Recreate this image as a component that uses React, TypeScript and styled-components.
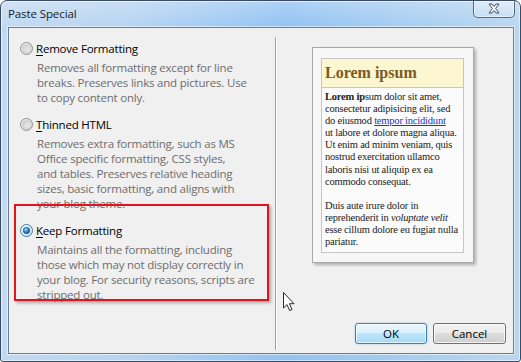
import React from "react";
import styled, { createGlobalStyle } from "styled-components";

const Global = createGlobalStyle`
  html, body { margin: 0; padding: 0; background: #ffffff; }
  body { width: 521px; height: 362px; overflow: hidden; }
  #root { width: 521px; height: 362px; }
`;

const Window = styled.div`
  position: relative;
  width: 521px;
  height: 362px;
  box-sizing: border-box;
  border: 1px solid #3a4c63;
  border-radius: 7px 7px 3px 3px;
  background:
    linear-gradient(180deg, rgba(255,255,255,0.25) 0px, rgba(255,255,255,0) 26px),
    linear-gradient(90deg, #c2daf1 0%, #b6d4f2 25%, #93c3f3 55%, #a4ccf2 75%, #bad7f0 100%);
  box-shadow: inset 0 0 0 1px rgba(255, 255, 255, 0.55);
  display: flex;
  flex-direction: column;
  font-family: "Segoe UI", "Open Sans", "Noto Sans", sans-serif;
  overflow: hidden;
`;

const TitleBar = styled.div`
  height: 26px;
  flex: none;
  display: flex;
  align-items: flex-start;
  justify-content: space-between;
  padding-left: 7px;
  padding-right: 5px;
`;

const TitleText = styled.span`
  font-size: 11.5px;
  line-height: 26px;
  color: #1b1b1b;
  letter-spacing: -0.1px;
`;

const CloseButton = styled.div`
  width: 42px;
  height: 18px;
  margin-top: -1px;
  box-sizing: border-box;
  border: 1px solid rgba(40, 62, 92, 0.75);
  border-top: none;
  border-radius: 0 0 5px 5px;
  background: linear-gradient(180deg, rgba(255,255,255,0.45), rgba(255,255,255,0.15));
  box-shadow: inset 0 0 0 1px rgba(255,255,255,0.5);
  display: flex;
  align-items: center;
  justify-content: center;
`;

const Client = styled.div`
  flex: 1;
  margin: 0 6px 7px 7px;
  border: 1px solid #6a7d94;
  background: #f0f0f0;
  box-shadow: 0 0 0 1px rgba(255, 255, 255, 0.55);
  display: grid;
  grid-template-columns: 266px 2px 1fr;
  min-height: 0;
`;

const Options = styled.div`
  padding: 13px 0 0 11px;
  display: flex;
  flex-direction: column;
`;

const Option = styled.div`
  display: flex;
  flex-direction: column;
  margin-bottom: 12px;
`;

const OptionLabel = styled.div`
  display: flex;
  align-items: center;
  gap: 3px;
  font-size: 11.5px;
  letter-spacing: -0.2px;
  line-height: 15px;
  height: 15px;
  color: #000000;
  margin-bottom: 4px;
  white-space: nowrap;
  u { text-decoration: underline; text-underline-offset: 2px; }
`;

const Description = styled.div`
  margin-left: 17px;
  font-size: 11.5px;
  letter-spacing: -0.2px;
  line-height: 15px;
  color: #6d6d6d;
  white-space: nowrap;
`;

const Separator = styled.div`
  margin: 9px 0 3px 0;
  border-left: 1px solid #a0a0a0;
  border-right: 1px solid #ffffff;
`;

const RightPane = styled.div`
  display: flex;
  flex-direction: column;
  padding: 19px 7px 9px 35px;
`;

const PreviewCard = styled.div`
  width: 162px;
  height: 216px;
  box-sizing: border-box;
  border: 1px solid #a9a9a9;
  background: #f7f7f7;
  box-shadow: 2px 2px 3px rgba(0, 0, 0, 0.28);
  padding: 10px 9px 9px 8px;
  display: flex;
`;

const PreviewInner = styled.div`
  flex: 1;
  border: 1px solid #c6c6c6;
  background: #fbfbfb;
  display: flex;
  flex-direction: column;
  font-family: "Liberation Serif", "Times New Roman", serif;
`;

const PreviewHeader = styled.div`
  height: 28px;
  background: #fcf6d1;
  border-bottom: 1px solid #c6c6c6;
  padding-left: 3px;
  font-size: 16px;
  font-weight: bold;
  line-height: 28px;
  color: #7a5a22;
`;

const PreviewBody = styled.div`
  padding: 3px 0 0 3px;
  font-size: 10.5px;
  letter-spacing: -0.2px;
  line-height: 12.1px;
  color: #222222;
  white-space: nowrap;
  p { margin: 0 0 12px 0; }
  a { color: #1a35c8; text-decoration: underline; }
`;

const Spacer = styled.div`
  flex: 1;
`;

const ButtonRow = styled.div`
  display: flex;
  justify-content: flex-end;
  gap: 6px;
`;

const Button = styled.div<{ $primary?: boolean }>`
  width: ${(p) => (p.$primary ? "72px" : "73px")};
  height: 21px;
  box-sizing: border-box;
  border: 1px solid ${(p) => (p.$primary ? "#3c7fb1" : "#707070")};
  border-radius: 3px;
  background: ${(p) =>
    p.$primary
      ? "linear-gradient(180deg, #eaf6fd 0%, #d9f0fc 50%, #bee6fd 50%, #a7d9f5 100%)"
      : "linear-gradient(180deg, #f2f2f2 0%, #ebebeb 50%, #dddddd 50%, #cfcfcf 100%)"};
  box-shadow: inset 0 0 0 1px ${(p) => (p.$primary ? "rgba(255,255,255,0.7)" : "rgba(255,255,255,0.75)")}
    ${(p) => (p.$primary ? ", 0 0 2px rgba(90,170,230,0.6)" : "")};
  display: flex;
  align-items: center;
  justify-content: center;
  font-size: 11.5px;
  color: #000000;
`;

const Annotation = styled.div`
  position: absolute;
  left: 13px;
  top: 203px;
  width: 255px;
  height: 97px;
  box-sizing: border-box;
  border: 2px solid #e4121b;
  box-shadow: 2px 2px 3px rgba(0, 0, 0, 0.3);
  pointer-events: none;
`;

const Cursor = styled.svg`
  position: absolute;
  left: 281px;
  top: 290px;
`;

const Radio: React.FC<{ checked?: boolean }> = ({ checked }) => (
  <svg width="13" height="13" viewBox="0 0 13 13">
    <defs>
      <linearGradient id={checked ? "rgc" : "rgu"} x1="0" y1="0" x2="1" y2="1">
        <stop offset="0" stopColor={checked ? "#ffffff" : "#f6f6f6"} />
        <stop offset="1" stopColor={checked ? "#d6e8f6" : "#d2d2d2"} />
      </linearGradient>
      <radialGradient id="rdot" cx="0.4" cy="0.35" r="0.7">
        <stop offset="0" stopColor="#9cdcff" />
        <stop offset="0.5" stopColor="#2f8ad0" />
        <stop offset="1" stopColor="#0d3f78" />
      </radialGradient>
      <linearGradient id="rin" x1="0" y1="0" x2="1" y2="1">
        <stop offset="0" stopColor="#c9c9c9" />
        <stop offset="1" stopColor="#f4f4f4" />
      </linearGradient>
    </defs>
    <circle cx="6.5" cy="6.5" r="6" fill={`url(#${checked ? "rgc" : "rgu"})`} stroke={checked ? "#3d76a8" : "#8e8f8f"} strokeWidth="1" />
    {checked ? (
      <circle cx="6.5" cy="6.5" r="3.3" fill="url(#rdot)" stroke="#1f5b93" strokeWidth="0.6" />
    ) : (
      <circle cx="6.5" cy="6.5" r="4" fill="url(#rin)" stroke="#bdbdbd" strokeWidth="0.6" />
    )}
  </svg>
);

export default function App() {
  return (
    <>
      <Global />
      <Window>
        <TitleBar>
          <TitleText>Paste Special</TitleText>
          <CloseButton>
            <svg width="14" height="11" viewBox="0 0 14 11">
              <path
                d="M2 1 L5 1 L7 3.5 L9 1 L12 1 L8.6 5.5 L12 10 L9 10 L7 7.5 L5 10 L2 10 L5.4 5.5 Z"
                fill="#ffffff"
                stroke="#3b4d63"
                strokeWidth="1"
                strokeLinejoin="round"
              />
            </svg>
          </CloseButton>
        </TitleBar>
        <Client>
          <Options>
            <Option>
              <OptionLabel>
                <Radio />
                <span><u>R</u>emove Formatting</span>
              </OptionLabel>
              <Description>
                Removes all formatting except for line<br />
                breaks. Preserves links and pictures. Use<br />
                to copy content only.
              </Description>
            </Option>
            <Option>
              <OptionLabel>
                <Radio />
                <span><u>T</u>hinned HTML</span>
              </OptionLabel>
              <Description>
                Removes extra formatting, such as MS<br />
                Office specific formatting, CSS styles,<br />
                and tables. Preserves relative heading<br />
                sizes, basic formatting, and aligns with<br />
                your blog theme.
              </Description>
            </Option>
            <Option>
              <OptionLabel>
                <Radio checked />
                <span><u>K</u>eep Formatting</span>
              </OptionLabel>
              <Description>
                Maintains all the formatting, including<br />
                those which may not display correctly in<br />
                your blog. For security reasons, scripts are<br />
                stripped out.
              </Description>
            </Option>
          </Options>
          <Separator />
          <RightPane>
            <PreviewCard>
              <PreviewInner>
                <PreviewHeader>Lorem ipsum</PreviewHeader>
                <PreviewBody>
                  <p>
                    <b>Lorem ip</b>sum dolor sit amet,<br />
                    consectetur adipisicing elit, sed<br />
                    do eiusmod <a>tempor incididunt</a><br />
                    ut labore et dolore magna aliqua.<br />
                    Ut enim ad minim veniam, quis<br />
                    nostrud exercitation ullamco<br />
                    laboris nisi ut aliquip ex ea<br />
                    commodo consequat.
                  </p>
                  <p>
                    Duis aute irure dolor in<br />
                    reprehenderit in <i>voluptate velit</i><br />
                    esse cillum dolore eu fugiat nulla<br />
                    pariatur.
                  </p>
                </PreviewBody>
              </PreviewInner>
            </PreviewCard>
            <Spacer />
            <ButtonRow>
              <Button $primary>OK</Button>
              <Button>Cancel</Button>
            </ButtonRow>
          </RightPane>
        </Client>
        <Annotation />
        <Cursor width="14" height="22" viewBox="0 0 14 22">
          <path
            d="M1.5 1.5 L1.5 17 L5 13.6 L7.6 19.6 L10 18.6 L7.4 12.7 L12 12.7 Z"
            fill="#ffffff"
            stroke="#2a2a2a"
            strokeWidth="1"
            strokeLinejoin="miter"
          />
        </Cursor>
      </Window>
    </>
  );
}
